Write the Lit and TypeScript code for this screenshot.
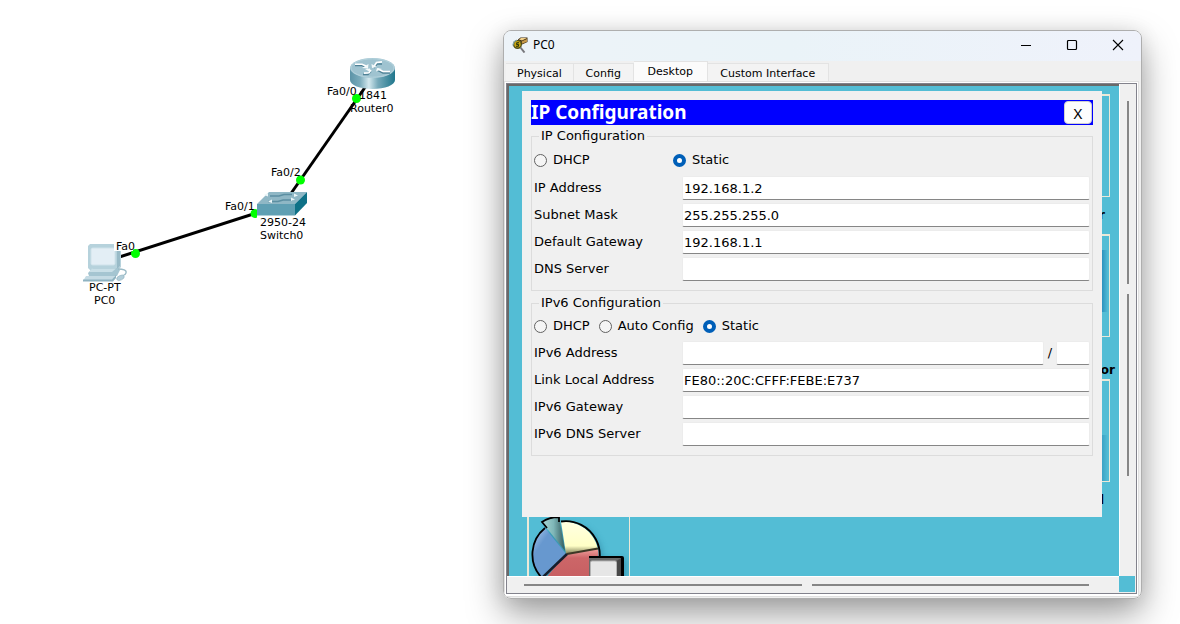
import { LitElement, html, css, svg } from "lit";
import { customElement, property } from "lit/decorators.js";

interface Field {
  id: string;
  label: string;
  value: string;
  prefix?: boolean;
}

interface Choice {
  label: string;
  checked: boolean;
}

const ipv4: Field[] = [
  { id: "ip-address", label: "IP Address", value: "192.168.1.2" },
  { id: "subnet-mask", label: "Subnet Mask", value: "255.255.255.0" },
  { id: "default-gateway", label: "Default Gateway", value: "192.168.1.1" },
  { id: "dns-server", label: "DNS Server", value: "" },
];

const ipv6: Field[] = [
  { id: "ipv6-address", label: "IPv6 Address", value: "", prefix: true },
  { id: "link-local", label: "Link Local Address", value: "FE80::20C:CFFF:FEBE:E737" },
  { id: "ipv6-gateway", label: "IPv6 Gateway", value: "" },
  { id: "ipv6-dns", label: "IPv6 DNS Server", value: "" },
];

// Network map: three devices joined by two cables.
@customElement("network-map")
export class NetworkMap extends LitElement {
  static styles = css`
    :host {
      position: absolute;
      left: 0;
      top: 0;
      display: block;
    }
    .map {
      display: block;
    }
    .name {
      font: 11px "DejaVu Sans", sans-serif;
      fill: #000;
    }
    .cable {
      stroke: #000;
      stroke-width: 3;
    }
    .port {
      fill: #0f0;
    }
    .plate {
      fill: #fff;
    }
  `;

  private router() {
    return svg`
      <g>
        <path d="M350 68v12c0 5 10 9 22.500 9S395 85 395 80V68z" fill="url(#drum)"/>
        <ellipse cx="372.500" cy="68" rx="22.500" ry="10" fill="#9fc3d0"/>
        <ellipse cx="372.500" cy="68" rx="21.500" ry="9.200" fill="none" stroke="#b5d3dd" stroke-width="1"/>
        <g fill="none" stroke="#4f8296" stroke-width="1.500">
          <path d="M355 65.500h7l5 2M374 68l3-4h5M390 73h-7l-6-3M371 71.500l-3 3h-5"/>
        </g>
        <g fill="none" stroke="#fff" stroke-width="1.600">
          <path d="M355 64.200h7l4.500 2M374 66.500l2.500-4 5.500-.6M390 71.500h-7l-5-2.500M371 70l-2 2.800-5 .3"/>
        </g>
        <path d="M368.500 64l-.5 4.500-6-.5zM371.500 64l.5 4 5-1zM376 71.500l1-3.500 5 1zM365 69l5-.5v3.500z" fill="#f4fafb"/>
      </g>`;
  }

  private switchBox() {
    return svg`
      <g>
        <path d="M257 204l12-12h38l-12 12z" fill="#8fb7c5"/>
        <path d="M257 204h38v11.500h-38z" fill="#5f9fb3"/>
        <path d="M295 204l12-12v11l-12 12.500z" fill="#0e7187"/>
        <g fill="none" stroke="#5c8fa2" stroke-width="1.500">
          <path d="M270 196h9l5-1.500h8M268 201.500h10l5-1.500h10"/>
        </g>
        <g fill="#eaf5f8">
          <path d="M264 195l4-2v3.500zM298 195.500l-4-2v3.500zM268 201.500l4-2v3.500zM295 199.500l-4-2v3.500z"/>
        </g>
      </g>`;
  }

  private computer() {
    return svg`
      <g>
        <path d="M90 244h27l4 3v20l-4 4H91l-3-3v-22z" fill="#b6d2dc"/>
        <rect x="91" y="248" width="24" height="17" rx="1.500" fill="#e3eef5" stroke="#cfe2ea"/>
        <path d="M117 246l3-1.500v21l-3 4z" fill="#98bac7"/>
        <path d="M93 268h24l3 2-3 6H89l-1-3z" fill="#a5c5d1"/>
        <path d="M92 268.500h24l-4 3.500H89z" fill="#c9dfe7"/>
        <path d="M86 276h29l-3 5H83z" fill="#c5dbe4"/>
        <path d="M83 279.500h29l4-4.500v3l-3 3.500H83z" fill="#8fb3c1"/>
        <path d="M118 269c5 0 9 1 8 4s-4 2-5 4" fill="none" stroke="#9abac6" stroke-width="1.300"/>
        <ellipse cx="120.500" cy="278" rx="4" ry="2.300" fill="#b2ced9" stroke="#96b6c3" stroke-width=".6" transform="rotate(-25 120 278)"/>
      </g>`;
  }

  render() {
    return html`
      <svg class="map" width="440" height="330" viewBox="0 0 440 330" role="img" aria-label="Network topology">
        <defs>
          <linearGradient id="drum">
            <stop offset="0" stop-color="#5b93a7" />
            <stop offset=".22" stop-color="#7aabbb" />
            <stop offset=".42" stop-color="#d3e8ee" />
            <stop offset=".62" stop-color="#77aaba" />
            <stop offset="1" stop-color="#1f768c" />
          </linearGradient>
        </defs>
        <line class="cable" x1="110" y1="260" x2="275" y2="207" />
        <line class="cable" x1="285" y1="202" x2="366" y2="86" />
        ${this.router()} ${this.switchBox()} ${this.computer()}
        <circle class="port" cx="135.500" cy="253.500" r="4.500" />
        <rect class="plate" x="114" y="240" width="19" height="11" />
        <circle class="port" cx="356.500" cy="98.500" r="4.500" />
        <circle class="port" cx="300.500" cy="180" r="4.500" />
        <path class="port" d="M257 209.500a4.500 4.500 0 1 0 0 8z" />
        <text class="name" x="327" y="95">Fa0/0</text>
        <text class="name" x="359" y="99">1841</text>
        <text class="name" x="350" y="112">Router0</text>
        <text class="name" x="271" y="176">Fa0/2</text>
        <text class="name" x="225" y="210">Fa0/1</text>
        <text class="name" x="260" y="226">2950-24</text>
        <text class="name" x="260" y="239">Switch0</text>
        <text class="name" x="116" y="250">Fa0</text>
        <text class="name" x="89" y="291">PC-PT</text>
        <text class="name" x="94" y="304">PC0</text>
      </svg>
    `;
  }
}

// One framed group of the IP dialog: mode radios, then address rows.
@customElement("address-group")
export class AddressGroup extends LitElement {
  @property() heading = "";
  @property() layout = "";
  @property({ attribute: false }) choices: Choice[] = [];
  @property({ attribute: false }) fields: Field[] = [];

  static styles = css`
    :host {
      display: block;
      font: 13px/16px "DejaVu Sans", sans-serif;
      color: #000;
    }
    .group {
      margin: 0;
      padding: 0 2px 9px 2px;
      border: 1px solid #dcdcdc;
      min-width: 0;
    }
    .heading {
      margin-left: 5px;
      padding: 0 2px;
    }
    .modes {
      display: flex;
      align-items: center;
      gap: 9px;
      height: 30px;
    }
    .modes.split {
      display: grid;
      grid-template-columns: 139px 1fr;
      gap: 0;
      height: 32px;
    }
    .mode {
      display: flex;
      align-items: center;
      gap: 6px;
    }
    .radio {
      appearance: none;
      box-sizing: border-box;
      width: 13px;
      height: 13px;
      margin: 0;
      border: 1px solid #626262;
      border-radius: 50%;
      background: #f5f5f5;
    }
    .radio:checked {
      border: 4px solid #005fb8;
      background: #fff;
    }
    .rows {
      display: grid;
      gap: 3px;
    }
    .row {
      display: grid;
      grid-template-columns: 148px 1fr;
      align-items: center;
    }
    .value {
      display: flex;
      align-items: center;
      min-width: 0;
    }
    .slash {
      width: 12px;
      text-align: center;
    }
    .box {
      flex: 1;
      box-sizing: border-box;
      min-width: 0;
      height: 24px;
      margin: 0;
      padding: 1px 1px 0;
      border: 1px solid #ececec;
      border-bottom-color: #868686;
      border-radius: 2px;
      background: #fff;
      font: 13px "DejaVu Sans", sans-serif;
      color: #000;
      outline: none;
    }
    .box.short {
      flex: 0 0 34px;
    }
  `;

  render() {
    return html`
      <fieldset class="group">
        <legend class="heading">${this.heading}</legend>
        <div class="modes ${this.layout}">
          ${this.choices.map(
            (c) => html`<label class="mode">
              <input class="radio" type="radio" name="mode" .checked=${c.checked} />${c.label}
            </label>`
          )}
        </div>
        <div class="rows">
          ${this.fields.map(
            (f) => html`<div class="row">
              <label for=${f.id}>${f.label}</label>
              <div class="value">
                <input class="box" id=${f.id} type="text" .value=${f.value} />
                ${f.prefix
                  ? html`<span class="slash">/</span>
                      <input class="box short" type="text" aria-label="Prefix length" />`
                  : ""}
              </div>
            </div>`
          )}
        </div>
      </fieldset>
    `;
  }
}

@customElement("app-root")
export class AppRoot extends LitElement {
  private tabs = [
    { text: "Physical", kind: "" },
    { text: "Config", kind: "" },
    { text: "Desktop", kind: "active" },
    { text: "Custom Interface", kind: "wide" },
  ];

  // Labels below the shortcut tiles and how far each reaches past the dialog.
  private shortcuts = [
    { text: "r", reach: 3, tile: "", caption: "" },
    { text: "or", reach: 13, tile: "lit", caption: "tall" },
    { text: "l", reach: 2, tile: "dim", caption: "" },
  ];

  static styles = css`
    :host {
      position: relative;
      display: block;
      height: 100vh;
      overflow: hidden;
      background: #fff;
      font: 12px/16px "DejaVu Sans", sans-serif;
      color: #000;
    }
    .window {
      position: absolute;
      left: 503px;
      right: 38px;
      top: 30px;
      bottom: 25px;
      box-sizing: border-box;
      display: flex;
      flex-direction: column;
      border: 1px solid #aeaeae;
      border-radius: 8px;
      background: #f0f0f0;
      overflow: hidden;
    }
    .shadow {
      position: absolute;
      left: 503px;
      right: 38px;
      top: 30px;
      bottom: 25px;
      border-radius: 8px;
      box-shadow: 0 16px 36px rgba(0, 0, 0, 0.36), 0 2px 20px rgba(0, 0, 0, 0.1);
    }
    .titlebar {
      box-sizing: border-box;
      display: flex;
      align-items: center;
      height: 30px;
      padding: 0 0 2px 8px;
      background: linear-gradient(90deg, #edf3f8, #eaf3f8 45%, #eff2fb);
      font: 12px/16px "Noto Sans", sans-serif;
    }
    .title {
      flex: 1;
      margin-left: 5px;
      font-weight: 400;
    }
    .control {
      display: flex;
      align-items: center;
      justify-content: center;
      width: 46px;
      height: 28px;
      padding: 0;
      border: 0;
      background: none;
    }
    .tabs {
      display: flex;
      align-items: flex-end;
      height: 20px;
      padding-left: 2px;
    }
    .tab {
      box-sizing: border-box;
      height: 18px;
      min-width: 60px;
      padding: 2px 11px 0;
      border: 1px solid #e3e3e3;
      border-left-width: 0;
      border-bottom: 0;
      background: #f3f3f3;
      font: 11px/16px "DejaVu Sans", sans-serif;
      color: #000;
    }
    .tab.wide {
      min-width: 121px;
    }
    .tab.active {
      height: 20px;
      min-width: 74px;
      padding-top: 1px;
      background: #fbfbfb;
    }
    .pane {
      flex: 1;
      display: flex;
      min-height: 0;
      margin: 0 2px 1px 0;
      padding: 1px 1px 2px;
      border: 1px solid #e0e0e0;
      background: #fff;
    }
    .frame {
      flex: 1;
      display: grid;
      grid-template: minmax(0, 1fr) 17px / minmax(0, 1fr) 17px;
      min-width: 0;
      border: 1px solid #82828c;
      background: #f0f0f0;
    }
    .view {
      display: grid;
      grid-template: minmax(0, 1fr) 59px / 13px 1fr 17px;
      min-width: 0;
      min-height: 0;
      padding-top: 5px;
      border: solid #696969;
      border-width: 2px 0 0 2px;
      background: #53bdd5;
      overflow: hidden;
    }
    .dialog {
      position: relative;
      z-index: 1;
      grid-area: 1 / 2;
      padding: 9px;
      background: #f0f0f0;
    }
    .bar {
      display: flex;
      align-items: center;
      justify-content: space-between;
      height: 25px;
      margin-bottom: 3px;
      padding-right: 1px;
      background: #00f;
      color: #fff;
    }
    .heading {
      margin: 0;
      font: bold 19px/25px "Noto Sans", sans-serif;
    }
    .close {
      box-sizing: border-box;
      width: 28px;
      height: 23px;
      padding: 0;
      border: 1px solid #d0d0d0;
      border-radius: 4px;
      background: #fdfdfd;
      font: 15px/20px "Noto Sans", sans-serif;
      color: #000;
    }
    .second {
      margin-top: 4px;
    }
    .shortcuts {
      grid-area: 1 / 3;
      padding-top: 3px;
    }
    .tile {
      box-sizing: border-box;
      width: 8px;
      height: 103px;
      border: solid #ece9d8;
      border-width: 2px 1px 1px 0;
    }
    .tile.lit {
      background: linear-gradient(90deg, #2c92bf, #53bdd5) no-repeat 0 14px / 6px 62px;
    }
    .tile.dim {
      background: linear-gradient(90deg, #3ba3c6, #53bdd5) no-repeat 0 54px / 6px 46px;
    }
    .caption {
      box-sizing: border-box;
      display: flex;
      justify-content: flex-end;
      height: 37px;
      font: bold 12px/37px "DejaVu Sans", sans-serif;
    }
    .caption.tall {
      height: 42px;
      padding-top: 24px;
      line-height: 18px;
    }
    .chart {
      grid-area: 2 / 1 / 3 / 3;
      box-sizing: border-box;
      width: 103px;
      margin-left: 18px;
      border: solid #ece9d8;
      border-width: 0 1px 0 2px;
      overflow: hidden;
    }
    .picture {
      display: block;
    }
    .track {
      display: flex;
      gap: 10px;
    }
    .track.down {
      flex-direction: column;
      padding: 17px 0 100px 7px;
      border-left: 1px solid #fff;
    }
    .track.across {
      padding: 7px 30px 0 17px;
      border-top: 1px solid #fff;
    }
    .thumb {
      flex: 1;
      background: #868686;
    }
    .down .thumb {
      width: 2px;
    }
    .across .thumb {
      height: 2px;
    }
    .corner {
      width: 16px;
      height: 16px;
      background: #53bdd5;
    }
  `;

  private appIcon() {
    return svg`
      <svg width="16" height="16" viewBox="0 0 16 16" aria-hidden="true">
        <path d="M6 2.500L8.500.5H15.500V5L10 7.500 6 5.500z" fill="#3f2d10"/>
        <path d="M7 2.500L9 1h6l-5 2.500z" fill="#f0cf88"/>
        <path d="M10 4.200L15 2v2.700L10 6.800z" fill="#c79a4b"/>
        <path d="M6.500 3.200L9.300 4.500v2L6.500 5.200z" fill="#dcb469"/>
        <circle cx="5.500" cy="7.500" r="4.500" fill="#4d4d16"/>
        <circle cx="5.500" cy="7.300" r="3.200" fill="#c9a613"/>
        <path d="M.8 8.500c.5-3 1.500-4.500 4-5.500" fill="none" stroke="#88acb0" stroke-width="1.200"/>
        <path d="M7 5.800H5L4.600 7.200l2 .6-.4 1.500H4" fill="none" stroke="#1e2c08" stroke-width="1.100"/>
        <path d="M8.500 10.500l4 5" stroke="#77777c" stroke-width="2"/>
      </svg>`;
  }

  private pie() {
    return svg`
      <svg class="picture" width="100" height="59" viewBox="0 0 100 59" aria-hidden="true">
        <defs>
          <linearGradient id="blue" x1="0" y1="0" x2="1" y2="1">
            <stop offset="0" stop-color="#b4cfee"/><stop offset=".3" stop-color="#6798cf"/><stop offset=".8" stop-color="#6798cf"/><stop offset="1" stop-color="#2d507c"/>
          </linearGradient>
          <linearGradient id="cream" x1="0" y1="0" x2="0" y2="1">
            <stop offset="0" stop-color="#ffffe2"/><stop offset=".75" stop-color="#ffffc6"/><stop offset="1" stop-color="#7c7c54"/>
          </linearGradient>
          <linearGradient id="red" x1="0" y1="0" x2="0" y2="1">
            <stop offset="0" stop-color="#f0a09d"/><stop offset=".3" stop-color="#cc6668"/><stop offset="1" stop-color="#c75f62"/>
          </linearGradient>
          <linearGradient id="wedge">
            <stop offset="0" stop-color="#a9d7d4"/><stop offset=".5" stop-color="#7fb7b8"/><stop offset="1" stop-color="#31595c"/>
          </linearGradient>
          <filter id="soft" x="-20%" y="-20%" width="140%" height="140%"><feGaussianBlur stdDeviation="3"/></filter>
        </defs>
        <circle cx="40" cy="41" r="34" fill="#2c83a0" opacity=".6" filter="url(#soft)"/>
        <rect x="64" y="42" width="33" height="30" fill="#2c83a0" opacity=".6" filter="url(#soft)"/>
        <path d="M37 37L16 11A34 34 0 0 0 12 60z" fill="url(#blue)"/>
        <path d="M37 37L32 5A34 34 0 0 1 69 32z" fill="url(#cream)"/>
        <path d="M37 37l32-5a34 34 0 0 1-10 30H16z" fill="url(#red)"/>
        <path d="M38 37l31-5.500" stroke="#3c3826" stroke-width="2"/>
        <path d="M38 37L14 60" stroke="#171d2c" stroke-width="2.500"/>
        <path d="M16 11A34 34 0 0 0 12 60M32 4.500A34 34 0 0 1 62 61" fill="none" stroke="#000" stroke-width="1.800"/>
        <path d="M36 34L13 5c4-4 10-5 17-5z" fill="url(#wedge)"/>
        <path d="M18 11l-5-6c4-3 10-5 17-5v5" fill="none" stroke="#000" stroke-width="1.800"/>
        <path d="M60 39h33q2 0 2 2v20H60z" fill="#000"/>
        <path d="M60 41h32v18H60z" fill="#6a6a6a"/>
        <path d="M86 45l6-4v18h-6z" fill="#484848"/>
        <rect x="61.500" y="44" width="26" height="20" rx="1.500" fill="#e6e6e6" stroke="#b5b5b5"/>
      </svg>`;
  }

  render() {
    return html`
      <network-map></network-map>
      <div class="shadow"></div>
      <section class="window" aria-label="PC0">
        <header class="titlebar">
          ${this.appIcon()}
          <span class="title">PC0</span>
          <button class="control" aria-label="Minimize">
            <svg width="12" height="12" viewBox="0 0 12 12"><path d="M1 6.500h10" stroke="#000" /></svg>
          </button>
          <button class="control" aria-label="Maximize">
            <svg width="12" height="12" viewBox="0 0 12 12">
              <rect x="1.500" y="1.500" width="9" height="9" rx="1" fill="none" stroke="#000" stroke-width="1.200" />
            </svg>
          </button>
          <button class="control" aria-label="Close">
            <svg width="12" height="12" viewBox="0 0 12 12">
              <path d="M1 1l10 10M11 1L1 11" stroke="#000" stroke-width="1.100" />
            </svg>
          </button>
        </header>
        <nav class="tabs" role="tablist">
          ${this.tabs.map(
            (t) => html`<button
              class="tab ${t.kind}"
              role="tab"
              aria-selected=${t.kind === "active"}
            >${t.text}</button>`
          )}
        </nav>
        <div class="pane">
          <div class="frame">
            <div class="view">
              <div class="dialog">
                <div class="bar">
                  <h1 class="heading">IP Configuration</h1>
                  <button class="close">X</button>
                </div>
                <address-group
                  heading="IP Configuration"
                  layout="split"
                  .choices=${[
                    { label: "DHCP", checked: false },
                    { label: "Static", checked: true },
                  ]}
                  .fields=${ipv4}
                ></address-group>
                <address-group
                  class="second"
                  heading="IPv6 Configuration"
                  .choices=${[
                    { label: "DHCP", checked: false },
                    { label: "Auto Config", checked: false },
                    { label: "Static", checked: true },
                  ]}
                  .fields=${ipv6}
                ></address-group>
              </div>
              <div class="shortcuts">
                ${this.shortcuts.map(
                  (s) => html`<div class="tile ${s.tile}"></div>
                    <div class="caption ${s.caption}" style="width:${s.reach}px">${s.text}</div>`
                )}
              </div>
              <div class="chart">${this.pie()}</div>
            </div>
            <div class="track down"><div class="thumb"></div><div class="thumb"></div></div>
            <div class="track across"><div class="thumb"></div><div class="thumb"></div></div>
            <div class="corner"></div>
          </div>
        </div>
      </section>
    `;
  }
}
